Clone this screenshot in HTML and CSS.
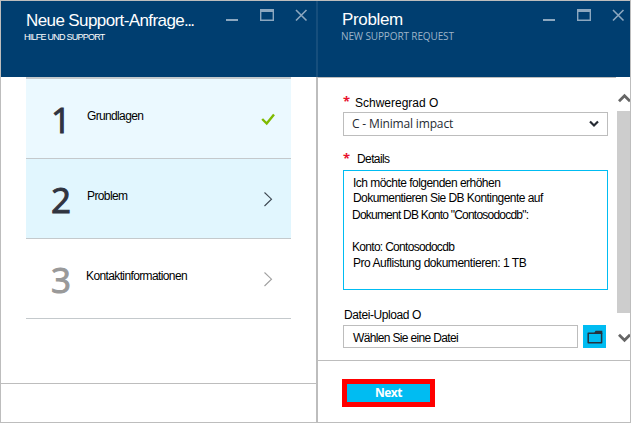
FILE: index.html
```html
<!DOCTYPE html>
<html lang="de">
<head>
<meta charset="utf-8">
<title>Neue Support-Anfrage</title>
<link rel="stylesheet" href="styles.css">
</head>
<body>
<div class="portal">
  <section class="blade blade-steps">
    <header class="head">
      <div class="titles">
        <h1 class="title title-new">Neue Support-Anfrage<span class="dots">...</span></h1>
        <p class="sub sub-help">HILFE UND SUPPORT</p>
      </div>
      <svg class="controls" width="84" height="16" viewBox="0 0 84 16"><path d="M1 13H13" stroke-width="2"/><path d="M35.7 3.5V13.3H48.3V3.5" stroke-width="1.4"/><path d="M35 3.5H49" stroke-width="3"/><path d="M71 3L81.5 13.5M81.5 3L71 13.5" stroke-width="1.6"/></svg>
    </header>
    <ol class="steps">
      <li class="step done"><span class="num">1</span><span class="name n1">Grundlagen</span><svg class="mark" width="16" height="16" viewBox="0 0 16 16"><path d="M2.2 8L6.7 12.5L14 3.5" fill="none" stroke="#7fba00" stroke-width="2.4"/></svg></li>
      <li class="step active"><span class="num">2</span><span class="name n2">Problem</span><svg class="mark" width="16" height="16" viewBox="0 0 16 16"><path d="M4.5 1.5L11.5 8.2L4.5 15" fill="none" stroke="#3c4650" stroke-width="1.1"/></svg></li>
      <li class="step pending"><span class="num">3</span><span class="name n3">Kontaktinformationen</span><svg class="mark" width="16" height="16" viewBox="0 0 16 16"><path d="M4.5 1.5L11.5 8.2L4.5 15" fill="none" stroke="#a0a0a0" stroke-width="1.1"/></svg></li>
    </ol>
    <footer class="foot foot-steps"></footer>
  </section>
  <section class="blade blade-form">
    <header class="head">
      <div class="titles">
        <h2 class="title title-problem">Problem</h2>
        <p class="sub sub-request">NEW SUPPORT REQUEST</p>
      </div>
      <svg class="controls" width="84" height="16" viewBox="0 0 84 16"><path d="M1 13H13" stroke-width="2"/><path d="M35.7 3.5V13.3H48.3V3.5" stroke-width="1.4"/><path d="M35 3.5H49" stroke-width="3"/><path d="M71 3L81.5 13.5M81.5 3L71 13.5" stroke-width="1.6"/></svg>
    </header>
    <div class="body">
      <form class="form">
        <div class="label"><span class="star">*</span><span class="l-severity">Schweregrad O</span></div>
        <div class="box select"><span class="value">C - Minimal impact</span><svg width="10" height="8" viewBox="0 0 10 8"><path d="M1 1.5L5 5.5L9 1.5" fill="none" stroke="#262b33" stroke-width="2.2"/></svg></div>
        <div class="label label-details"><span class="star">*</span><span class="l-details">Details</span></div>
        <div class="box details">
          <p class="t1">Ich möchte folgenden erhöhen</p>
          <p class="t2">Dokumentieren Sie DB Kontingente auf</p>
          <p class="t3">Dokument DB Konto "Contosodocdb":</p>
          <p class="t4">Konto: Contosodocdb</p>
          <p class="t5">Pro Auflistung dokumentieren: 1 TB</p>
        </div>
        <div class="label label-upload"><span class="l-upload">Datei-Upload O</span></div>
        <div class="upload">
          <div class="box file"><span class="l-file">Wählen Sie eine Datei</span></div>
          <div class="browse"><svg width="16" height="14" viewBox="0 0 16 14"><path d="M1.2 3.2H14.6V12.8H1.2Z" fill="none" stroke="#25323f" stroke-width="1.5" stroke-linejoin="round"/><path d="M7 3.5L8.5 .7H15.3V4H7Z" fill="#25323f"/></svg></div>
        </div>
      </form>
      <div class="scroll">
        <svg width="13" height="10" viewBox="0 0 13 10"><path d="M2 8.2L7.5 2.8L13 8.2" fill="none" stroke="#666" stroke-width="2.8"/></svg>
        <div class="thumb"></div>
        <svg class="down" width="13" height="10" viewBox="0 0 13 10"><path d="M2 1.8L7.5 7.2L13 1.8" fill="none" stroke="#666" stroke-width="2.8"/></svg>
      </div>
    </div>
    <footer class="foot foot-form"><div class="next">Next</div></footer>
  </section>
</div>
</body>
</html>
```

FILE: styles.css
```css
* { box-sizing: border-box; }
body, h1, h2, p, ol { margin: 0; padding: 0; }
body { background: #fff; color: #000; font: 12px/16px "Liberation Sans", Arial, sans-serif; white-space: nowrap; overflow: hidden; }
svg { display: block; flex: none; }
.portal { width: 631px; height: 423px; border: 1px solid #bdbdbd; display: grid; grid-template-columns: 315px 314px; }
.blade { display: flex; flex-direction: column; min-width: 0; }
.head { height: 76px; background: #003e70; color: #fff; display: flex; justify-content: space-between; flex: none; }
.blade-form > .head { border-left: 2px solid #164e7c; }
.titles { padding: 10px 0 0 25px; }
.blade-form .titles { padding: 9px 0 0 23px; }
.title { font-weight: 400; font-size: 17px; line-height: 20px; }
.title-new { letter-spacing: -0.6px; }
.dots { letter-spacing: -1.6px; }
.title-problem { letter-spacing: -0.35px; margin-left: 1px; }
.sub { font-size: 9px; line-height: 12px; }
.sub-help { margin-left: -2px; letter-spacing: -0.75px; }
.sub-request { font: 10px/12px "Open Sans", sans-serif; font-weight: 500; color: #9db4c9; letter-spacing: -0.12px; }
.controls { fill: none; stroke: #8ca7bf; margin: 6px 7px 0 0; }
.blade-form .controls { margin-right: 4px; }
.steps { list-style: none; margin: 0 25px; border-top: 2px solid #c4c9cc; }
.step { height: 80px; border-bottom: 1px solid #c4c9cc; display: flex; align-items: center; padding: 0 15px 0 25px; }
.done { background: #ebf9ff; }
.active { background: #e1f6fe; }
.num { width: 36px; font: 500 35px/48px "Open Sans", sans-serif; color: #30343f; padding-top: 2px; -webkit-text-stroke: 1px currentColor; }
.pending .num { color: #999; }
.name { flex: 1; padding-bottom: 5px; }
.n1 { letter-spacing: -0.65px; }
.n2 { letter-spacing: -0.6px; }
.n3 { letter-spacing: -0.62px; margin-left: -1px; }
.foot { margin-top: auto; border-top: 1px solid #bdbdbd; flex: none; }
.foot-steps { height: 39px; }
.blade-form > .body, .foot-form { border-left: 2px solid #bdbdbd; }
.body { flex: 1; display: flex; justify-content: space-between; }
.form { width: 298px; border-top: 1px solid #bdbdbd; padding: 17px 8px 0 25px; }
.label { display: flex; height: 17px; }
.star { width: 12px; color: #e8112d; font: 700 13px/13px "Open Sans", sans-serif; }
.box { border: 1px solid #bdbdbd; }
.select { height: 24px; display: flex; justify-content: space-between; align-items: center; padding: 0 8px; }
.value { font: 12px/20px "Open Sans", sans-serif; color: #262b33; letter-spacing: -0.16px; }
.label-details { margin-top: 16px; height: 18px; }
.l-details { letter-spacing: -0.6px; margin: -1px 0 0 2px; }
.details { height: 120px; border-color: #00bcf2; padding: 4px 8px; }
.t1 { letter-spacing: -0.53px; margin-left: 1px; }
.t2 { letter-spacing: -0.55px; margin: -1px 0 0 1px; }
.t3 { letter-spacing: -0.78px; margin-top: 1px; }
.t4 { letter-spacing: -0.7px; margin-top: 16px; }
.t5 { letter-spacing: -0.45px; margin-left: 1px; }
.label-upload { margin-top: 17px; height: 18px; }
.l-upload { letter-spacing: -0.42px; margin-left: 1px; }
.upload { display: flex; gap: 5px; }
.file { width: 235px; height: 23px; padding: 4px 9px; }
.l-file { letter-spacing: -0.65px; }
.browse { width: 23px; height: 23px; background: #00bcf2; display: grid; place-items: center; }
.scroll { width: 13px; padding-top: 16px; }
.thumb { height: 202px; background: #cdcdcd; margin: 8px 0 20px; }
.foot-form { height: 62px; padding: 18px 24px; }
.next { width: 93px; height: 28px; border: 5px solid #f00; background: #00bcf2; color: #fff; text-align: center; font: 700 12px/18px "Open Sans", sans-serif; letter-spacing: -0.5px; }
```
